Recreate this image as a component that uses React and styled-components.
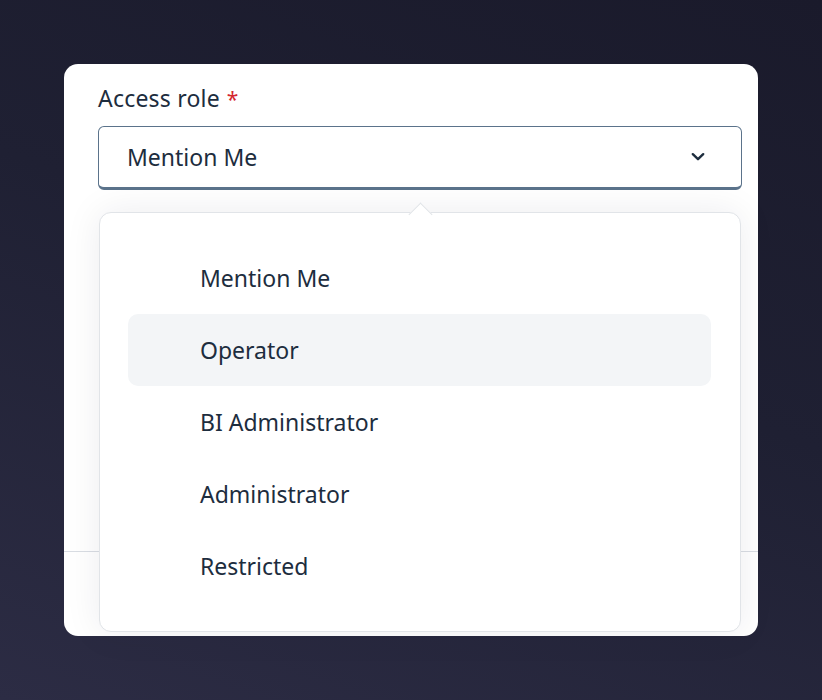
import React from "react";
import styled, { createGlobalStyle } from "styled-components";

const Global = createGlobalStyle`
  html, body { margin: 0; padding: 0; }
  body {
    width: 822px; height: 700px; overflow: hidden;
    background: linear-gradient(200deg, #1a1a2b 0%, #1f2033 45%, #2c2c44 100%);
    font-family: "Noto Sans", "Liberation Sans", sans-serif;
    color: #1d2d3e;
  }
`;

const Stage = styled.div`
  padding: 64px;
  height: 700px;
  box-sizing: border-box;
`;

const Card = styled.div`
  position: relative;
  width: 694px;
  height: 572px;
  background: #ffffff;
  border-radius: 14px;
  box-sizing: border-box;
  padding: 18px 16px 0 34px;
  display: flex;
  flex-direction: column;
`;

const Label = styled.div`
  font-size: 23px;
  line-height: 32px;
  height: 32px;
  margin-bottom: 12px;
  letter-spacing: 0.2px;
`;

const Star = styled.span`
  color: #d4262e;
  font-size: 21px;
  margin-left: 7px;
`;

const Trigger = styled.div`
  height: 64px;
  box-sizing: border-box;
  border: 1px solid #5b738b;
  border-bottom-width: 3px;
  border-radius: 6px;
  display: flex;
  align-items: center;
  justify-content: space-between;
  padding: 0 36px 1px 28px;
  font-size: 23px;
`;

const Divider = styled.div`
  margin-top: auto;
  margin-left: -34px;
  margin-right: -16px;
  height: 1px;
  background: #d9dde3;
  margin-bottom: 84px;
`;

const Popover = styled.div`
  position: absolute;
  left: 35px;
  top: 148px;
  width: 642px;
  height: 420px;
  box-sizing: border-box;
  background: #ffffff;
  border: 1px solid #e1e4e8;
  border-radius: 12px;
  box-shadow: 0 0 36px rgba(20, 30, 50, 0.08);
  padding: 29px 29px 29px 28px;
  display: flex;
  flex-direction: column;
`;

const Arrow = styled.div`
  position: absolute;
  top: -7px;
  left: 312px;
  width: 16px;
  height: 16px;
  background: #ffffff;
  border-left: 1px solid #e1e4e8;
  border-top: 1px solid #e1e4e8;
  transform: rotate(45deg);
`;

const Item = styled.div`
  height: 72px;
  border-radius: 10px;
  display: flex;
  align-items: center;
  padding-left: 72px;
  font-size: 23px;
  background: ${(p) => (p.$active ? "#f3f5f7" : "transparent")};
`;

const Chevron = () => (
  <svg width="14" height="10" viewBox="0 0 14 10" fill="none">
    <path d="M1.8 2.2 L7 7.2 L12.2 2.2" stroke="#1d2d3e" strokeWidth="2.4" strokeLinecap="round" strokeLinejoin="round" />
  </svg>
);

const items = ["Mention Me", "Operator", "BI Administrator", "Administrator", "Restricted"];

export default function App() {
  return (
    <>
      <Global />
      <Stage>
        <Card>
          <Label>
            Access role<Star>*</Star>
          </Label>
          <Trigger>
            <span>Mention Me</span>
            <Chevron />
          </Trigger>
          <Divider />
          <Popover>
            <Arrow />
            {items.map((it) => (
              <Item key={it} $active={it === "Operator"}>
                {it}
              </Item>
            ))}
          </Popover>
        </Card>
      </Stage>
    </>
  );
}
